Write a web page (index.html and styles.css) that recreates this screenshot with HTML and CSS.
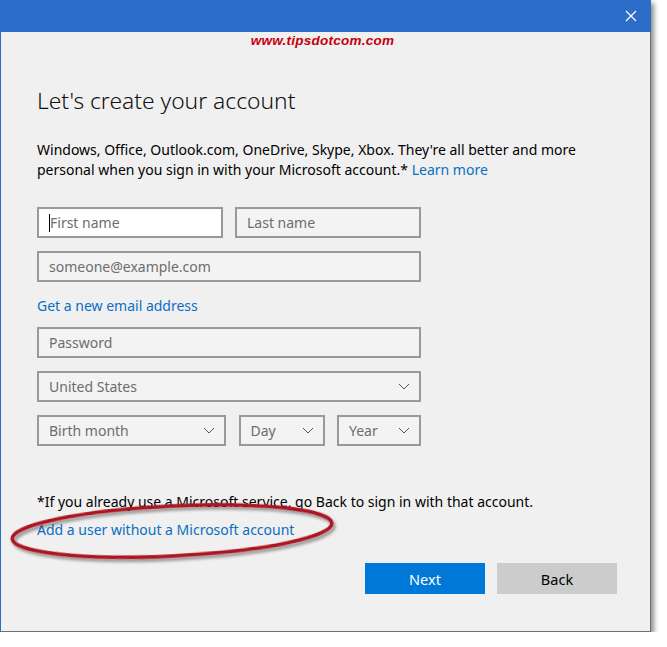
FILE: index.html
```html
<!DOCTYPE html>
<html lang="en">
<head>
<meta charset="utf-8">
<title>Let's create your account</title>
<link rel="stylesheet" href="styles.css">
</head>
<body>
<div class="window">
  <div class="titlebar">
    <svg class="close" width="12" height="12" viewBox="0 0 12 12"><path d="M1 1 L11 11 M11 1 L1 11" stroke="#fff" stroke-width="1.2" fill="none"/></svg>
  </div>
  <div class="content">
    <div class="watermark">www.tipsdotcom.com</div>
    <h1 class="heading">Let's create your account</h1>
    <p class="intro">Windows, Office, Outlook.com, OneDrive, Skype, Xbox. They're all better and more personal when you sign in with your Microsoft account.* <a class="link">Learn more</a></p>
    <div class="form">
      <div class="row">
        <div class="field focused w185"><span class="caret"></span>First name</div>
        <div class="field w185">Last name</div>
      </div>
      <div class="field full">someone@example.com</div>
      <div class="link getnew">Get a new email address</div>
      <div class="field full">Password</div>
      <div class="field full select"><span>United States</span><svg class="chev" width="12" height="7" viewBox="0 0 12 7"><path d="M1 1 L6 6 L11 1" stroke="#555" stroke-width="1" fill="none"/></svg></div>
      <div class="row">
        <div class="field select wmonth"><span>Birth month</span><svg class="chev" width="12" height="7" viewBox="0 0 12 7"><path d="M1 1 L6 6 L11 1" stroke="#555" stroke-width="1" fill="none"/></svg></div>
        <div class="field select wday"><span>Day</span><svg class="chev" width="12" height="7" viewBox="0 0 12 7"><path d="M1 1 L6 6 L11 1" stroke="#555" stroke-width="1" fill="none"/></svg></div>
        <div class="field select wyear"><span>Year</span><svg class="chev" width="12" height="7" viewBox="0 0 12 7"><path d="M1 1 L6 6 L11 1" stroke="#555" stroke-width="1" fill="none"/></svg></div>
      </div>
    </div>
    <p class="note">*If you already use a Microsoft service, go Back to sign in with that account.</p>
    <div class="addwrap">
      <span class="link">Add a user without a Microsoft account</span>
      <svg class="ellipse" width="350" height="72" viewBox="0 0 350 72">
        <defs>
          <filter id="sh" x="-10%" y="-30%" width="120%" height="160%">
            <feDropShadow dx="2" dy="3" stdDeviation="1.8" flood-color="#000" flood-opacity="0.4"/>
          </filter>
        </defs>
        <ellipse cx="165" cy="34" rx="160" ry="25" transform="rotate(-2.8 165 34)" fill="none" stroke="#ab1320" stroke-width="3.5" filter="url(#sh)"/>
      </svg>
    </div>
    <div class="buttons">
      <div class="btn primary">Next</div>
      <div class="btn secondary">Back</div>
    </div>
  </div>
</div>
</body>
</html>
```
FILE: styles.css
```css
html, body {
  margin: 0;
  padding: 0;
  background: #ffffff;
}
body {
  font-family: "Noto Sans", "Open Sans", sans-serif;
  color: #000;
}
.window {
  width: 651px;
  height: 632px;
  background: #f0f0f0;
  border-left: 1px solid #2b6dc9;
  border-right: 1px solid #6f6f6f;
  border-bottom: 1px solid #6f6f6f;
  box-sizing: border-box;
  box-shadow: 3px 3px 5px rgba(0,0,0,0.45);
  display: flex;
  flex-direction: column;
}
.titlebar {
  height: 32px;
  background: #2b6dc9;
  display: flex;
  justify-content: flex-end;
  align-items: center;
  padding-right: 14px;
  flex: none;
  margin-left: -1px;
  margin-right: -1px;
}
.content {
  padding: 0 0 0 36px;
  display: flex;
  flex-direction: column;
  position: relative;
}
.watermark {
  align-self: center;
  margin-left: -42px;
  margin-top: 1px;
  color: #c4000c;
  font-family: "Liberation Sans", Arial, sans-serif;
  font-weight: bold;
  font-style: italic;
  font-size: 13.5px;
  line-height: 16px;
  letter-spacing: 0.25px;
}
.heading {
  margin: 37px 0 0 0;
  font-weight: 300;
  font-size: 22.8px;
  line-height: 30px;
  color: #111;
}
.intro {
  margin: 24px 0 0 0;
  width: 560px;
  font-size: 14px;
  line-height: 20px;
}
.link {
  color: #0a6fc2;
}
.form {
  margin-top: 27px;
  display: flex;
  flex-direction: column;
  gap: 13px;
  width: 384px;
}
.row {
  display: flex;
  justify-content: space-between;
}
.field {
  height: 31px;
  box-sizing: border-box;
  border: 2px solid #999;
  background: #f3f3f3;
  color: #6d6d6d;
  font-size: 14px;
  padding: 0 10px;
  display: flex;
  align-items: center;
  position: relative;
}
.field.focused {
  background: #fff;
  padding-left: 11px;
}
.caret {
  position: absolute;
  left: 10px;
  top: 5px;
  width: 1px;
  height: 18px;
  background: #000;
}
.w185 { width: 186px; }
.full { width: 384px; }
.select { justify-content: space-between; padding-right: 9px; }
.wmonth { width: 189px; }
.wday { width: 86px; }
.wyear { width: 84px; }
.chev { flex: none; }
.getnew {
  font-size: 14px;
  line-height: 20px;
  margin: 1px 0 -2px 0;
}
.note {
  margin: 46px 0 0 0;
  font-size: 14px;
  line-height: 20px;
}
.addwrap {
  position: relative;
  margin-top: 8px;
  font-size: 14px;
  line-height: 20px;
}
.ellipse {
  position: absolute;
  left: -30px;
  top: -23px;
}
.buttons {
  display: flex;
  gap: 12px;
  margin-top: 23px;
  padding-left: 328px;
}
.btn {
  width: 120px;
  height: 31px;
  display: flex;
  align-items: center;
  justify-content: center;
  font-size: 14.5px;
}
.primary {
  background: #0078d7;
  color: #fff;
}
.secondary {
  background: #cccccc;
  color: #000;
}
```
